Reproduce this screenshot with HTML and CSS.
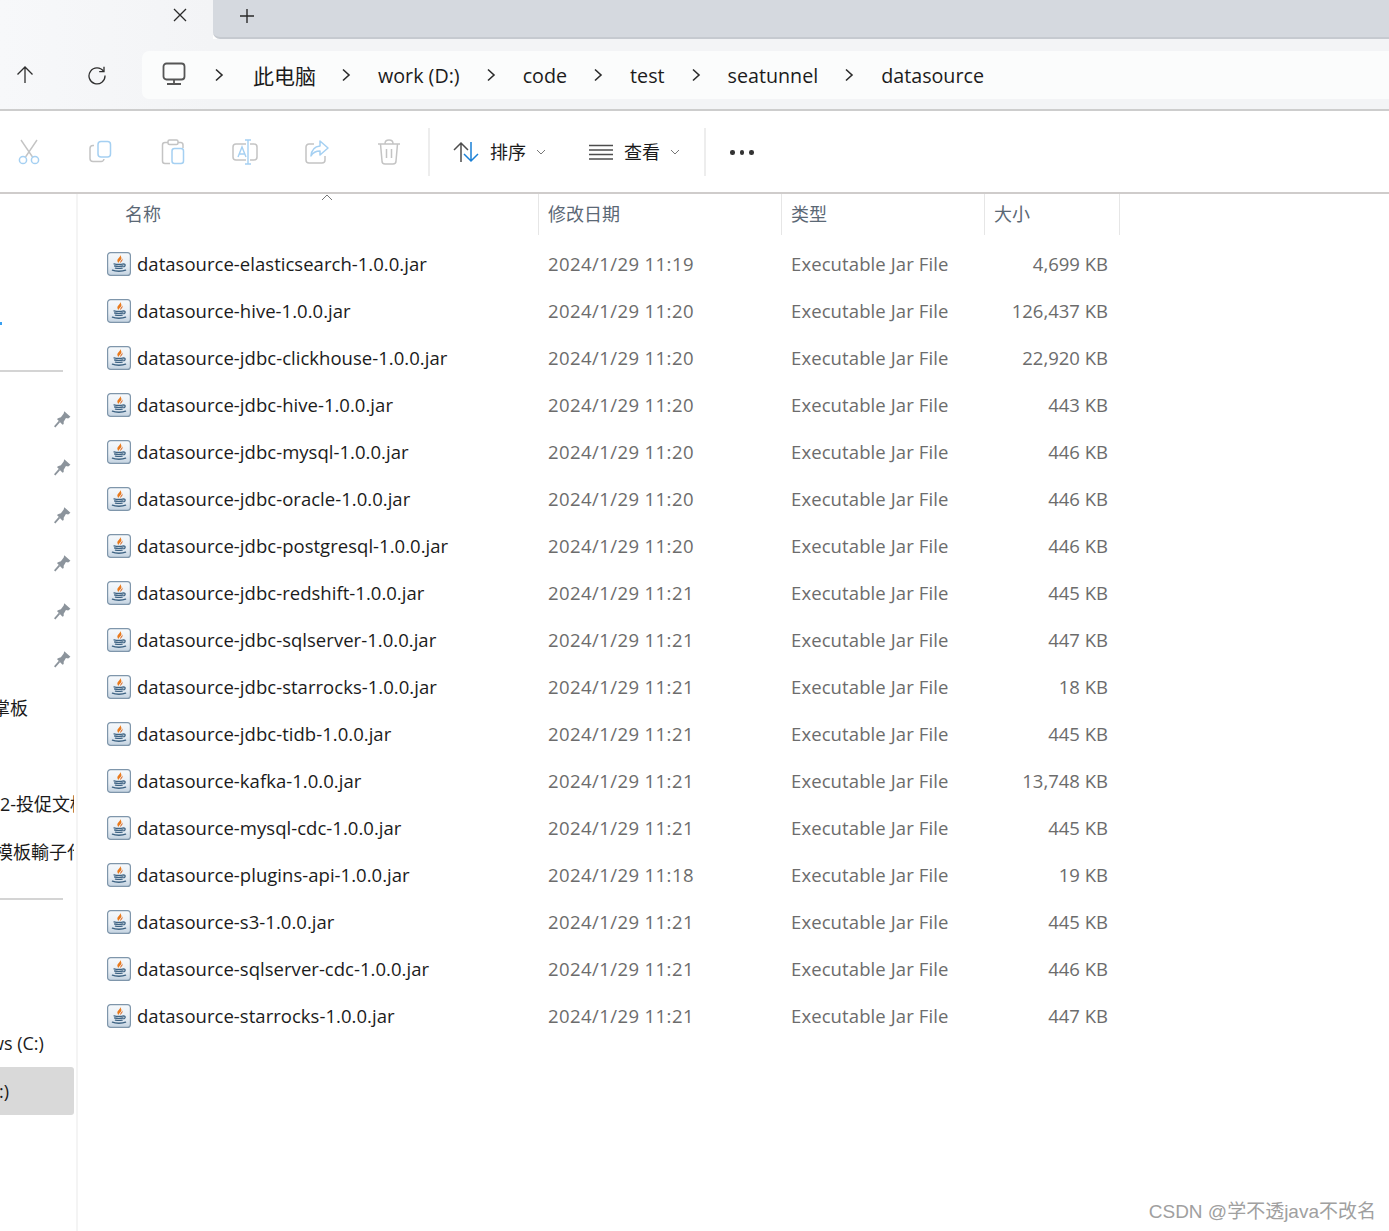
FILE: index.html
```html
<!DOCTYPE html>
<html lang="zh">
<head>
<meta charset="utf-8">
<title>datasource</title>
<link rel="stylesheet" href="styles.css">
</head>
<body>
<svg class="defs" width="0" height="0" aria-hidden="true">
  <defs>
    <linearGradient id="jarbg" x1="0" y1="0" x2="0" y2="1">
      <stop offset="0" stop-color="#f6f9fc"/>
      <stop offset="0.6" stop-color="#e6edf4"/>
      <stop offset="1" stop-color="#c3d2e0"/>
    </linearGradient>
    <symbol id="jar" viewBox="0 0 24 24">
      <rect x="0.6" y="0.6" width="22.8" height="22.8" rx="3" fill="url(#jarbg)" stroke="#7f96ab" stroke-width="1.2"/>
      <path d="M13 2.800c1.200 2.400-3 3.600-2.600 6.200.1.900.7 1.500 1.200 2.100-.3-1.600 3.200-3 2.800-5.400-.2-1.100-.7-2-1.400-2.900z" fill="#ea7a1c"/>
      <path d="M15 6.400c.3 1.800-1.800 2.300-1.700 3.800 0 .3.200.6.400.8-.1-.9 1.900-1.800 1.800-3.200 0-.6-.2-1-.5-1.400z" fill="#d9601a"/>
      <path d="M7 11.800c2.600.6 7 .6 9.600 0M7.600 14c2.400.5 6 .5 8.400 0M8.400 16.100c2 .4 5 .4 6.800 0M16.400 12.200c1.800-.6 2.600 1.400.6 2.600M5.400 18.200c3 1.400 10 1.400 13.200 0" fill="none" stroke="#3f6484" stroke-width="1.300" stroke-linecap="round"/>
    </symbol>
    <symbol id="pin" viewBox="0 0 16 16">
      <path d="M10 1l5.500 5-2 1.500-2-.5-2 3.500v2l-1 .5-5-5 1.500-1 2-.5L9.500 3z" fill="#8c949c"/>
      <path d="M5.800 10.200 1.500 15" fill="none" stroke="#8c949c" stroke-width="1.600"/>
    </symbol>
    <symbol id="chev" viewBox="0 0 10 14">
      <path d="M2 1.500 8 7l-6 5.500" fill="none" stroke="#2b2b2b" stroke-width="1.600"/>
    </symbol>
    <symbol id="drop" viewBox="0 0 10 6">
      <path d="M1 1l4 4 4-4" fill="none" stroke="#777" stroke-width="1"/>
    </symbol>
  </defs>
</svg>

<div class="app">
  <header class="tabstrip">
    <div class="tab-active">
      <svg class="ico-close" width="16" height="16" viewBox="0 0 16 16"><path d="M2 2l12 12M14 2 2 14" stroke="#2a2a2a" stroke-width="1.300" fill="none"/></svg>
    </div>
    <div class="tab-rest">
      <svg class="ico-plus" width="16" height="16" viewBox="0 0 16 16"><path d="M8 1v14M1 8h14" stroke="#2a2a2a" stroke-width="1.400" fill="none"/></svg>
    </div>
  </header>

  <nav class="navbar">
    <div class="nav-buttons">
      <button class="nav-btn">
        <svg width="20" height="20" viewBox="0 0 20 20"><path d="M10 18V2.500M2.500 9.500 10 2l7.500 7.500" fill="none" stroke="#2e2e2e" stroke-width="1.300"/></svg>
      </button>
      <button class="nav-btn">
        <svg width="20" height="20" viewBox="0 0 20 20"><path d="M16.500 6.200A8 8 0 1 0 18 10.500" fill="none" stroke="#2e2e2e" stroke-width="1.300"/><path d="M17 1.800v4.800h-4.800" fill="none" stroke="#2e2e2e" stroke-width="1.300"/></svg>
      </button>
    </div>
    <div class="address">
      <svg class="ico-pc" width="24" height="24" viewBox="0 0 24 24"><rect x="1.500" y="1.500" width="21" height="16" rx="3" fill="none" stroke="#555" stroke-width="1.800"/><path d="M12 18v3M5 22h14" stroke="#555" stroke-width="1.800" fill="none"/></svg>
      <svg class="crumb-chev lead"><use href="#chev"/></svg>
      <span class="crumb cjk">此电脑</span>
      <svg class="crumb-chev"><use href="#chev"/></svg>
      <span class="crumb">work (D:)</span>
      <svg class="crumb-chev"><use href="#chev"/></svg>
      <span class="crumb">code</span>
      <svg class="crumb-chev"><use href="#chev"/></svg>
      <span class="crumb">test</span>
      <svg class="crumb-chev"><use href="#chev"/></svg>
      <span class="crumb">seatunnel</span>
      <svg class="crumb-chev"><use href="#chev"/></svg>
      <span class="crumb">datasource</span>
    </div>
  </nav>

  <section class="toolbar">
    <div class="tool-group">
      <span class="tool">
        <svg width="24" height="26" viewBox="0 0 24 26"><path d="M4 1l11.500 17M20 1 8.500 18" fill="none" stroke="#c4c4c4" stroke-width="1.400"/><circle cx="6" cy="21" r="3.600" fill="none" stroke="#a5d0f2" stroke-width="1.500"/><circle cx="18" cy="21" r="3.600" fill="none" stroke="#a5d0f2" stroke-width="1.500"/></svg>
      </span>
      <span class="tool">
        <svg width="24" height="24" viewBox="0 0 24 24"><path d="M5 5.500H4A3 3 0 0 0 1 8.500v10A3 3 0 0 0 4 21.500h8a3 3 0 0 0 3-2.500" fill="none" stroke="#c4c4c4" stroke-width="1.500"/><rect x="9" y="1.500" width="12.500" height="15.500" rx="3" fill="none" stroke="#a5d0f2" stroke-width="1.500"/></svg>
      </span>
      <span class="tool">
        <svg width="24" height="26" viewBox="0 0 24 26"><path d="M7 3.500H4A2.500 2.500 0 0 0 1.500 6v16A2.500 2.500 0 0 0 4 24.500h5M17 3.500h3A2.500 2.500 0 0 1 22 6v3" fill="none" stroke="#c4c4c4" stroke-width="1.500"/><rect x="7" y="1" width="10" height="4.500" rx="1.500" fill="none" stroke="#c4c4c4" stroke-width="1.500"/><rect x="11" y="9.500" width="11.500" height="15" rx="2.500" fill="none" stroke="#a5d0f2" stroke-width="1.500"/></svg>
      </span>
      <span class="tool">
        <svg width="26" height="26" viewBox="0 0 26 26"><rect x="1" y="5" width="24" height="16" rx="3" fill="none" stroke="#c4c4c4" stroke-width="1.500"/><path d="M16 1v24" stroke="#fff" stroke-width="4" fill="none"/><path d="M16 1v24M13 1h6M13 25h6" stroke="#a5d0f2" stroke-width="1.400" fill="none"/><path d="M6 18l4-10 4 10M7.400 15h5.200" fill="none" stroke="#a5d0f2" stroke-width="1.400"/></svg>
      </span>
      <span class="tool">
        <svg width="24" height="24" viewBox="0 0 24 24"><path d="M9 4H4A3 3 0 0 0 1 7v13a3 3 0 0 0 3 3h13a3 3 0 0 0 3-3v-4" fill="none" stroke="#c4c4c4" stroke-width="1.500"/><path d="M15 1l8 7-8 7v-4c-4 0-7 1.500-9 5 .5-6 4-9.500 9-10z" fill="none" stroke="#a5d0f2" stroke-width="1.500" stroke-linejoin="round"/></svg>
      </span>
      <span class="tool">
        <svg width="24" height="26" viewBox="0 0 24 26"><path d="M1 5h22M8 4.500C8 2 10 1 12 1s4 1 4 3.500M3.500 5l1.500 17a3 3 0 0 0 3 3h8a3 3 0 0 0 3-3L20.500 5M9.500 10v9M14.500 10v9" fill="none" stroke="#c4c4c4" stroke-width="1.500"/></svg>
      </span>
    </div>
    <span class="tool-sep first"></span>
    <span class="menu sort">
      <svg width="26" height="22" viewBox="0 0 26 22"><path d="M8 21V2M1 9l7-7 7 7" fill="none" stroke="#4d4d4d" stroke-width="1.500"/><path d="M18 1v19M11 13l7 7 7-7" fill="none" stroke="#1a80d6" stroke-width="1.500"/></svg>
      <span class="menu-label">排序</span>
      <svg class="menu-drop"><use href="#drop"/></svg>
    </span>
    <span class="menu view">
      <svg width="24" height="16" viewBox="0 0 24 16"><path d="M0 1.500h24M0 6h24M0 10.500h24M0 15h24" fill="none" stroke="#4d4d4d" stroke-width="1.300"/></svg>
      <span class="menu-label">查看</span>
      <svg class="menu-drop"><use href="#drop"/></svg>
    </span>
    <span class="tool-sep second"></span>
    <span class="dots"><i></i><i></i><i></i></span>
  </section>

  <main class="content">
    <aside class="sidebar">
      <div class="side-row"><span class="side-blue"></span></div>
      <div class="side-row"><span class="side-line"></span></div>
      <div class="side-row"><svg class="pin"><use href="#pin"/></svg></div>
      <div class="side-row"><svg class="pin"><use href="#pin"/></svg></div>
      <div class="side-row"><svg class="pin"><use href="#pin"/></svg></div>
      <div class="side-row"><svg class="pin"><use href="#pin"/></svg></div>
      <div class="side-row"><svg class="pin"><use href="#pin"/></svg></div>
      <div class="side-row"><svg class="pin"><use href="#pin"/></svg></div>
      <div class="side-row"><span class="side-text t1">掌板</span></div>
      <div class="side-row"></div>
      <div class="side-row"><span class="side-text t2">2-投促文档</span></div>
      <div class="side-row"><span class="side-text t3">模板輸子代码</span></div>
      <div class="side-row"><span class="side-line"></span></div>
      <div class="side-row"></div>
      <div class="side-row"></div>
      <div class="side-row"><span class="side-text t4">ws (C:)</span></div>
      <div class="side-row selected"><span class="side-text t5">:)</span></div>
    </aside>

    <section class="files">
      <div class="col-head">
        <div class="h-name">名称<svg class="sort-caret" width="12" height="7" viewBox="0 0 12 7"><path d="M1 6l5-5 5 5" fill="none" stroke="#777" stroke-width="1"/></svg></div>
        <div class="h-date">修改日期</div>
        <div class="h-type">类型</div>
        <div class="h-size">大小</div>
      </div>
      <div class="row"><div class="c-name"><svg class="jar"><use href="#jar"/></svg>datasource-elasticsearch-1.0.0.jar</div><div class="c-date">2024/1/29 11:19</div><div class="c-type">Executable Jar File</div><div class="c-size">4,699 KB</div></div>
      <div class="row"><div class="c-name"><svg class="jar"><use href="#jar"/></svg>datasource-hive-1.0.0.jar</div><div class="c-date">2024/1/29 11:20</div><div class="c-type">Executable Jar File</div><div class="c-size">126,437 KB</div></div>
      <div class="row"><div class="c-name"><svg class="jar"><use href="#jar"/></svg>datasource-jdbc-clickhouse-1.0.0.jar</div><div class="c-date">2024/1/29 11:20</div><div class="c-type">Executable Jar File</div><div class="c-size">22,920 KB</div></div>
      <div class="row"><div class="c-name"><svg class="jar"><use href="#jar"/></svg>datasource-jdbc-hive-1.0.0.jar</div><div class="c-date">2024/1/29 11:20</div><div class="c-type">Executable Jar File</div><div class="c-size">443 KB</div></div>
      <div class="row"><div class="c-name"><svg class="jar"><use href="#jar"/></svg>datasource-jdbc-mysql-1.0.0.jar</div><div class="c-date">2024/1/29 11:20</div><div class="c-type">Executable Jar File</div><div class="c-size">446 KB</div></div>
      <div class="row"><div class="c-name"><svg class="jar"><use href="#jar"/></svg>datasource-jdbc-oracle-1.0.0.jar</div><div class="c-date">2024/1/29 11:20</div><div class="c-type">Executable Jar File</div><div class="c-size">446 KB</div></div>
      <div class="row"><div class="c-name"><svg class="jar"><use href="#jar"/></svg>datasource-jdbc-postgresql-1.0.0.jar</div><div class="c-date">2024/1/29 11:20</div><div class="c-type">Executable Jar File</div><div class="c-size">446 KB</div></div>
      <div class="row"><div class="c-name"><svg class="jar"><use href="#jar"/></svg>datasource-jdbc-redshift-1.0.0.jar</div><div class="c-date">2024/1/29 11:21</div><div class="c-type">Executable Jar File</div><div class="c-size">445 KB</div></div>
      <div class="row"><div class="c-name"><svg class="jar"><use href="#jar"/></svg>datasource-jdbc-sqlserver-1.0.0.jar</div><div class="c-date">2024/1/29 11:21</div><div class="c-type">Executable Jar File</div><div class="c-size">447 KB</div></div>
      <div class="row"><div class="c-name"><svg class="jar"><use href="#jar"/></svg>datasource-jdbc-starrocks-1.0.0.jar</div><div class="c-date">2024/1/29 11:21</div><div class="c-type">Executable Jar File</div><div class="c-size">18 KB</div></div>
      <div class="row"><div class="c-name"><svg class="jar"><use href="#jar"/></svg>datasource-jdbc-tidb-1.0.0.jar</div><div class="c-date">2024/1/29 11:21</div><div class="c-type">Executable Jar File</div><div class="c-size">445 KB</div></div>
      <div class="row"><div class="c-name"><svg class="jar"><use href="#jar"/></svg>datasource-kafka-1.0.0.jar</div><div class="c-date">2024/1/29 11:21</div><div class="c-type">Executable Jar File</div><div class="c-size">13,748 KB</div></div>
      <div class="row"><div class="c-name"><svg class="jar"><use href="#jar"/></svg>datasource-mysql-cdc-1.0.0.jar</div><div class="c-date">2024/1/29 11:21</div><div class="c-type">Executable Jar File</div><div class="c-size">445 KB</div></div>
      <div class="row"><div class="c-name"><svg class="jar"><use href="#jar"/></svg>datasource-plugins-api-1.0.0.jar</div><div class="c-date">2024/1/29 11:18</div><div class="c-type">Executable Jar File</div><div class="c-size">19 KB</div></div>
      <div class="row"><div class="c-name"><svg class="jar"><use href="#jar"/></svg>datasource-s3-1.0.0.jar</div><div class="c-date">2024/1/29 11:21</div><div class="c-type">Executable Jar File</div><div class="c-size">445 KB</div></div>
      <div class="row"><div class="c-name"><svg class="jar"><use href="#jar"/></svg>datasource-sqlserver-cdc-1.0.0.jar</div><div class="c-date">2024/1/29 11:21</div><div class="c-type">Executable Jar File</div><div class="c-size">446 KB</div></div>
      <div class="row"><div class="c-name"><svg class="jar"><use href="#jar"/></svg>datasource-starrocks-1.0.0.jar</div><div class="c-date">2024/1/29 11:21</div><div class="c-type">Executable Jar File</div><div class="c-size">447 KB</div></div>
    </section>
  </main>
  <div class="watermark">CSDN @学不透java不改名</div>
</div>
</body>
</html>
```

FILE: styles.css
```css
* { box-sizing: border-box; }
html, body { margin: 0; height: 100%; }
body {
  background: #fff;
  font-family: "Open Sans", "Noto Sans CJK SC", sans-serif;
  color: #1b1b1b;
  overflow: hidden;
}
.defs { position: absolute; }
.app {
  position: relative;
  width: 1389px;
  height: 1231px;
  overflow: hidden;
  display: flex;
  flex-direction: column;
}

/* tab strip */
.tabstrip { display: flex; height: 39px; flex: none; }
.tab-active {
  width: 213px;
  background: linear-gradient(90deg, #f7f8fa, #f3f4f6);
  display: flex;
  justify-content: flex-end;
  padding: 7px 25px 0 0;
}
.ico-close { width: 16px; height: 16px; }
.tab-rest {
  flex: 1;
  background: #d5d9df;
  border-bottom-left-radius: 7px;
  border-bottom: 2px solid #c6cad0;
  padding: 7px 0 0 26px;
}

/* nav bar */
.navbar {
  height: 72px;
  flex: none;
  background: linear-gradient(90deg, #f7f8fa, #f3f4f6 213px);
  border-bottom: 2px solid #cdcdcd;
  display: flex;
  padding-top: 12px;
}
.nav-buttons { width: 142px; display: flex; padding-left: 15px; gap: 52px; height: 48px; align-items: center; }
.nav-btn { border: 0; background: none; padding: 0; width: 20px; height: 20px; }
.address {
  flex: 1;
  height: 48px;
  background: #fbfcfc;
  border-radius: 7px 0 0 7px;
  display: flex;
  align-items: center;
  padding-left: 20px;
  font-size: 19.700px;
}
.ico-pc { margin: -3px 0 0 0; flex: none; }
.crumb { white-space: nowrap; }
.crumb.cjk { font-size: 21px; font-family: "Noto Sans CJK SC", sans-serif; margin-right: -1px; }
.crumb-chev { width: 10px; height: 14px; margin: 0 27px 0 26px; flex: none; }
.crumb-chev.lead { margin: 0 29px 0 28px; }

/* toolbar */
.toolbar {
  height: 83px;
  flex: none;
  display: flex;
  align-items: center;
  border-bottom: 2px solid #cfcccb;
  background: #fff;
}
.tool-group { display: flex; margin-left: -7px; }
.tool { width: 72px; height: 30px; display: flex; align-items: center; justify-content: center; }
.tool-sep { width: 2px; height: 48px; background: #ededed; flex: none; }
.tool-sep.first { margin-left: 3px; }
.menu { display: flex; align-items: center; font-size: 18px; flex: none; }
.menu.sort { margin-left: 23px; }
.menu.view { margin-left: 43px; }
.menu-label { margin: -2px 0 0 11px; font-family: "Noto Sans CJK SC", sans-serif; }
.menu-drop { width: 10px; height: 6px; margin-left: 10px; }
.tool-sep.second { margin-left: 24px; }
.dots { display: flex; gap: 5px; margin: 2px 0 0 24px; }
.dots i { width: 4.500px; height: 4.500px; border-radius: 50%; background: #333; }

/* content */
.content { flex: 1; display: flex; min-height: 0; }
.sidebar {
  width: 78px;
  flex: none;
  border-right: 2px solid #f4f4f4;
  padding-top: 105px;
}
.side-row {
  height: 48px;
  width: 74px;
  display: flex;
  align-items: center;
  overflow: hidden;
  white-space: nowrap;
  font-size: 18px;
  color: #1b1b1b;
}
.side-row.selected { background: #d9d9d9; border-radius: 0 3px 3px 0; }
.side-blue { width: 2px; height: 3px; background: #3aa0f0; }
.side-line { width: 63px; height: 2px; background: #d4d4d4; }
.pin { width: 18px; height: 18px; margin-left: 53px; }
.side-text { flex: none; }
.t1 { margin: -1px 0 0 -8px; }
.t2 { margin: -1px 0 0 0; }
.t3 { margin: 0 0 0 -5px; }
.t4 { margin-left: -10px; }
.t5 { margin-left: -1px; }

.files { flex: 1; min-width: 0; }
.col-head {
  display: grid;
  grid-template-columns: 461px 243px 203px 135px;
  height: 41px;
  color: #5b6875;
  font-size: 18px;
  font-family: "Noto Sans CJK SC", sans-serif;
}
.col-head > div { display: flex; align-items: center; border-right: 1px solid #e6e6e6; padding: 0 0 4px 9px; position: relative; }
.col-head .h-name { padding-left: 47px; }
.sort-caret { position: absolute; left: 243px; top: 0; }

.row {
  display: grid;
  grid-template-columns: 461px 243px 203px 135px;
  height: 47px;
  align-items: center;
  font-size: 18.500px;
  color: #6c6c6c;
}
.col-head + .row { margin-top: 5px; }
.c-name { display: flex; align-items: center; color: #1b1b1b; padding-left: 29px; white-space: nowrap; letter-spacing: 0.030px; }
.jar { width: 24px; height: 24px; margin-right: 6px; flex: none; }
.c-date { padding-left: 9px; white-space: nowrap; letter-spacing: 0.420px; }
.c-type { padding-left: 9px; white-space: nowrap; letter-spacing: 0.100px; }
.c-size { text-align: right; padding-right: 12px; white-space: nowrap; }

.watermark {
  position: absolute;
  right: 13px;
  top: 1196px;
  font-family: "Liberation Sans", "Noto Sans CJK SC", sans-serif;
  font-size: 19px;
  color: #a0a0a0;
  white-space: nowrap;
}
```
